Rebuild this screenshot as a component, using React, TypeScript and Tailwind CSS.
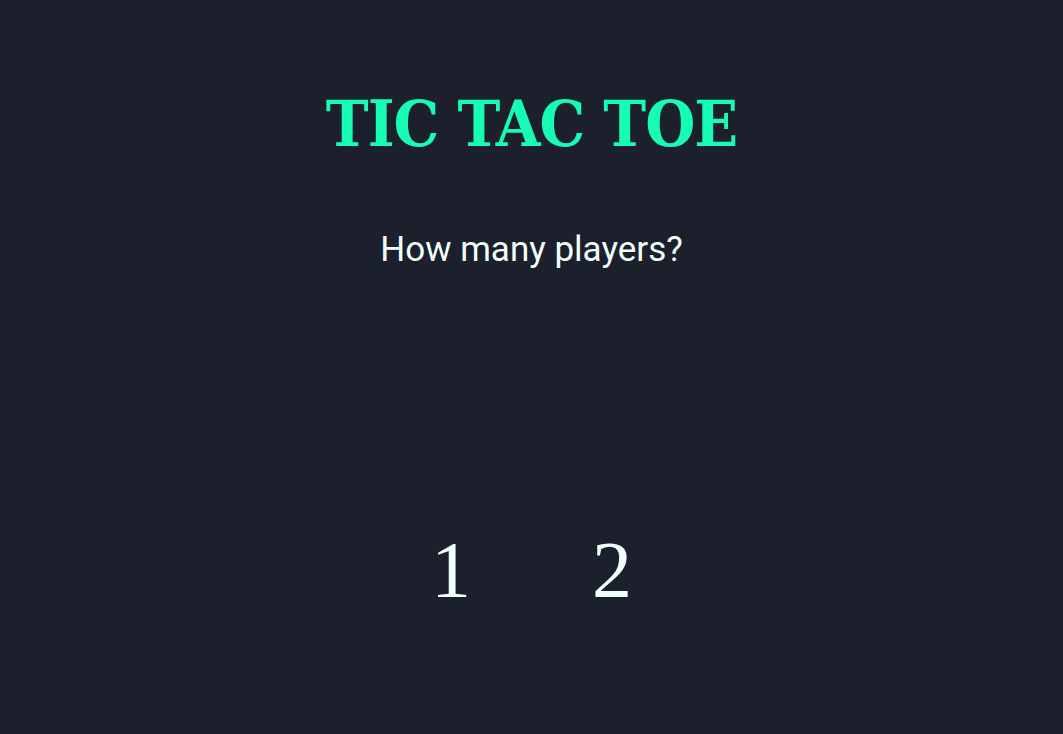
export default function App() {
  return (
    <div className="min-h-screen w-full bg-[#1b202c] flex flex-col items-center">
      <h1 className="mt-[88px] font-['DejaVu_Serif',serif] font-stretch-condensed text-[64px] leading-[72px] font-bold text-[#17fcb4] tracking-[-1px]">
        TIC TAC TOE
      </h1>
      <p className="mt-[68px] font-['Roboto',sans-serif] text-[35px] leading-[44px] text-[#f0fffa]">
        How many players?
      </p>
      <div className="mt-[258px] flex gap-[121px]">
        <button className="font-['Liberation_Serif',serif] text-[80px] leading-[80px] text-[#f0fffa]">
          1
        </button>
        <button className="font-['Liberation_Serif',serif] text-[80px] leading-[80px] text-[#f0fffa]">
          2
        </button>
      </div>
    </div>
  )
}
